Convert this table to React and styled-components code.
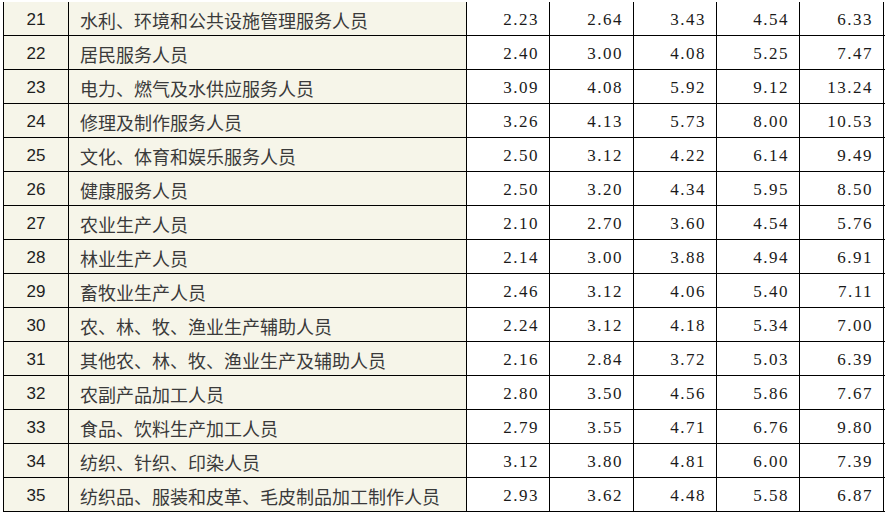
import styled, { createGlobalStyle } from 'styled-components';

const rows = [
  ['21', '水利、环境和公共设施管理服务人员', '2.23', '2.64', '3.43', '4.54', '6.33'],
  ['22', '居民服务人员', '2.40', '3.00', '4.08', '5.25', '7.47'],
  ['23', '电力、燃气及水供应服务人员', '3.09', '4.08', '5.92', '9.12', '13.24'],
  ['24', '修理及制作服务人员', '3.26', '4.13', '5.73', '8.00', '10.53'],
  ['25', '文化、体育和娱乐服务人员', '2.50', '3.12', '4.22', '6.14', '9.49'],
  ['26', '健康服务人员', '2.50', '3.20', '4.34', '5.95', '8.50'],
  ['27', '农业生产人员', '2.10', '2.70', '3.60', '4.54', '5.76'],
  ['28', '林业生产人员', '2.14', '3.00', '3.88', '4.94', '6.91'],
  ['29', '畜牧业生产人员', '2.46', '3.12', '4.06', '5.40', '7.11'],
  ['30', '农、林、牧、渔业生产辅助人员', '2.24', '3.12', '4.18', '5.34', '7.00'],
  ['31', '其他农、林、牧、渔业生产及辅助人员', '2.16', '2.84', '3.72', '5.03', '6.39'],
  ['32', '农副产品加工人员', '2.80', '3.50', '4.56', '5.86', '7.67'],
  ['33', '食品、饮料生产加工人员', '2.79', '3.55', '4.71', '6.76', '9.80'],
  ['34', '纺织、针织、印染人员', '3.12', '3.80', '4.81', '6.00', '7.39'],
  ['35', '纺织品、服装和皮革、毛皮制品加工制作人员', '2.93', '3.62', '4.48', '5.58', '6.87'],
];

const GlobalStyle = createGlobalStyle`
  body {
    margin: 0;
    background: #ffffff;
  }
`;

const Page = styled.div`
  padding: 2px 0 0 3px;
`;

const Table = styled.div`
  width: 881px;
  border-left: 1px solid #000;
`;

const Row = styled.div`
  display: grid;
  grid-template-columns: 65px 398px 83px 84px 83px 83px 84px;
  height: 34px;
  border-bottom: 1px solid #000;
  box-sizing: border-box;
`;

const Cell = styled.div`
  box-sizing: border-box;
  border-right: 1px solid #000;
  display: flex;
  align-items: center;
  padding-top: 3px;
`;

const IndexCell = styled(Cell)`
  justify-content: center;
  background: #f6f5e9;
  color: #1e1e1e;
  font-family: "Liberation Sans", sans-serif;
  font-size: 17px;
`;

const NameCell = styled(Cell)`
  background: #f6f5e9;
  padding-left: 11px;
  color: #3a3a3a;
  font-family: "Noto Sans CJK SC", sans-serif;
  font-size: 18px;
  white-space: nowrap;
`;

const NumCell = styled(Cell)`
  justify-content: flex-end;
  padding-right: 10px;
  background: #ffffff;
  color: #1a1a1a;
  font-family: "Liberation Serif", serif;
  font-size: 17px;
  letter-spacing: 1.5px;
`;

export default function App() {
  return (
    <>
      <GlobalStyle />
      <Page>
        <Table>
          {rows.map(([idx, name, ...vals]) => (
            <Row key={idx}>
              <IndexCell>{idx}</IndexCell>
              <NameCell>{name}</NameCell>
              {vals.map((v, i) => (
                <NumCell key={i}>{v}</NumCell>
              ))}
            </Row>
          ))}
        </Table>
      </Page>
    </>
  );
}
